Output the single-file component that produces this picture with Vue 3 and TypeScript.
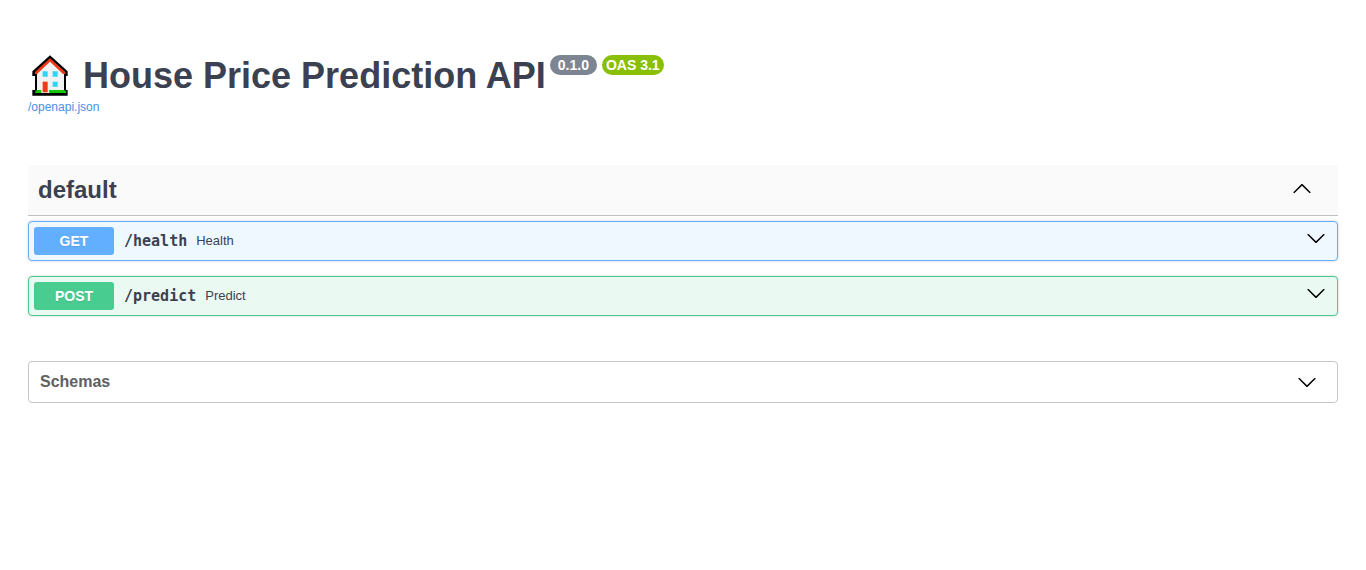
<script setup lang="ts">
import { ref } from 'vue'

interface Operation {
  method: string
  path: string
  summary: string
}

const operations: Operation[] = [
  { method: 'get', path: '/health', summary: 'Health' },
  { method: 'post', path: '/predict', summary: 'Predict' },
]

const tagOpen = ref(true)

const arrowDown =
  'M17.418 6.109c.272-.268.709-.268.979 0s.271.701 0 .969l-7.908 7.83c-.27.268-.707.268-.979 0l-7.908-7.83c-.27-.268-.27-.701 0-.969.271-.268.709-.268.979 0L10 13.25l7.418-7.141z'
const arrowUp =
  'M17.418 14.908c.272.268.709.268.979 0s.271-.701 0-.969l-7.908-7.83c-.27-.268-.707-.268-.979 0l-7.908 7.83c-.27.268-.27.701 0 .969.271.268.709.268.979 0L10 7.767l7.418 7.141z'
</script>

<template>
  <main class="page">
    <header class="info">
      <div class="heading">
        <svg class="house" viewBox="36 45 108 123" aria-hidden="true">
          <path d="M90 46 37 94v14h8v42h-8v17h106v-17h-5v-42h5V94Z" fill="#000" />
          <path d="M90 60 51 97v58h81V97Z" fill="#f2f2f2" />
          <path d="M90 55 45 96v6h6l39-37 39 37h7v-6Z" fill="#f03a17" />
          <path d="M46 159v-6l6-3h80l6 3v6Z" fill="#16c60c" />
          <path d="M64 122h23v37H64Z" fill="#f2f2f2" />
          <path d="M68 125h15v32H68Z" fill="#f03a17" />
          <path d="M68 94h15v16H68ZM98 94h15v16H98ZM98 125h15v15H98Z" fill="#31d2f7" />
        </svg>
        <h1 class="title">House Price Prediction API</h1>
        <div class="badges">
          <span class="badge version">0.1.0</span>
          <span class="badge oas">OAS 3.1</span>
        </div>
      </div>
      <a class="spec" href="/openapi.json">/openapi.json</a>
    </header>

    <section>
      <h2 class="tag">
        <button type="button" class="tag-toggle" :aria-expanded="tagOpen" @click="tagOpen = !tagOpen">
          <span>default</span>
          <svg class="arrow" viewBox="0 0 20 20" aria-hidden="true">
            <path :d="tagOpen ? arrowUp : arrowDown" />
          </svg>
        </button>
      </h2>
      <div v-if="tagOpen" class="operations">
        <button
          v-for="op in operations"
          :key="op.path"
          type="button"
          class="operation"
          :class="op.method"
          aria-expanded="false"
        >
          <span class="method">{{ op.method.toUpperCase() }}</span>
          <span class="path">{{ op.path }}</span>
          <span class="summary">{{ op.summary }}</span>
          <svg class="arrow" viewBox="0 0 20 20" aria-hidden="true">
            <path :d="arrowDown" />
          </svg>
        </button>
      </div>
    </section>

    <button type="button" class="schemas" aria-expanded="false">
      <span>Schemas</span>
      <svg class="arrow" viewBox="0 0 20 20" aria-hidden="true">
        <path :d="arrowDown" />
      </svg>
    </button>
  </main>
</template>

<style>
body {
  margin: 0;
  background: #fff;
}
</style>

<style scoped>
.page {
  box-sizing: border-box;
  max-width: 1460px;
  margin: 0 auto;
  padding: 55px 28px;
  font-family: 'Liberation Sans', Arial, sans-serif;
  color: #3b4151;
}

button {
  box-sizing: border-box;
  display: flex;
  align-items: center;
  width: 100%;
  margin: 0;
  font: inherit;
  color: inherit;
  text-align: left;
  cursor: pointer;
}

.info {
  margin-bottom: 50px;
}

.heading {
  display: flex;
  align-items: flex-start;
}

.house {
  flex: none;
  width: 36px;
  height: 41px;
  margin: 0 15px 0 4px;
}

.title {
  margin: 0;
  font-size: 36px;
  line-height: 41px;
  font-weight: 700;
}

.badges {
  display: flex;
  gap: 5px;
  margin-left: 4px;
}

.badge {
  border-radius: 10px;
  color: #fff;
  font-size: 14px;
  line-height: 20px;
  font-weight: 700;
  white-space: nowrap;
}

.version {
  padding: 0 8px;
  background: #7d8492;
}

.oas {
  padding: 0 4px;
  background: #89bf04;
}

.spec {
  display: block;
  width: max-content;
  margin-top: 3px;
  font-size: 12px;
  line-height: 16px;
  color: #4990e2;
  text-decoration: none;
}

.tag {
  margin: 0 0 5px;
}

.tag-toggle {
  height: 51px;
  padding: 0 26px 1px 10px;
  border: 0;
  border-bottom: 1px solid #bfc1c6;
  background: #fafafa;
  font-size: 24px;
  line-height: 28px;
  font-weight: 700;
}

.arrow {
  flex: none;
  width: 20px;
  height: 20px;
  margin-left: auto;
  fill: #000;
}

.tag-toggle .arrow {
  margin-bottom: 4px;
}

.operations {
  display: grid;
  gap: 15px;
}

.operation {
  height: 40px;
  padding: 5px 11px 5px 5px;
  border: 1px solid;
  border-radius: 4px;
  box-shadow: 0 0 3px rgba(0, 0, 0, 0.19);
}

.operation .arrow {
  margin-bottom: 6px;
}

.get {
  border-color: #61affe;
  background: #eff7ff;
}

.post {
  border-color: #49cc90;
  background: #ebf9f3;
}

.method {
  width: 80px;
  border-radius: 3px;
  color: #fff;
  font-size: 14px;
  line-height: 28px;
  font-weight: 700;
  text-align: center;
  text-shadow: 0 1px 0 rgba(0, 0, 0, 0.1);
}

.get .method {
  background: #61affe;
}

.post .method {
  background: #49cc90;
}

.path {
  margin: 0 9px 0 10px;
  font-family: 'DejaVu Sans Mono', monospace;
  font-size: 15px;
  line-height: 20px;
  font-weight: 700;
}

.summary {
  font-size: 13px;
  line-height: 16px;
}

.schemas {
  height: 42px;
  margin-top: 45px;
  padding: 0 20px 0 11px;
  border: 1px solid #c4c6ca;
  border-radius: 4px;
  background: #fff;
  color: #606060;
  font-size: 16px;
  line-height: 20px;
  font-weight: 700;
}
</style>
